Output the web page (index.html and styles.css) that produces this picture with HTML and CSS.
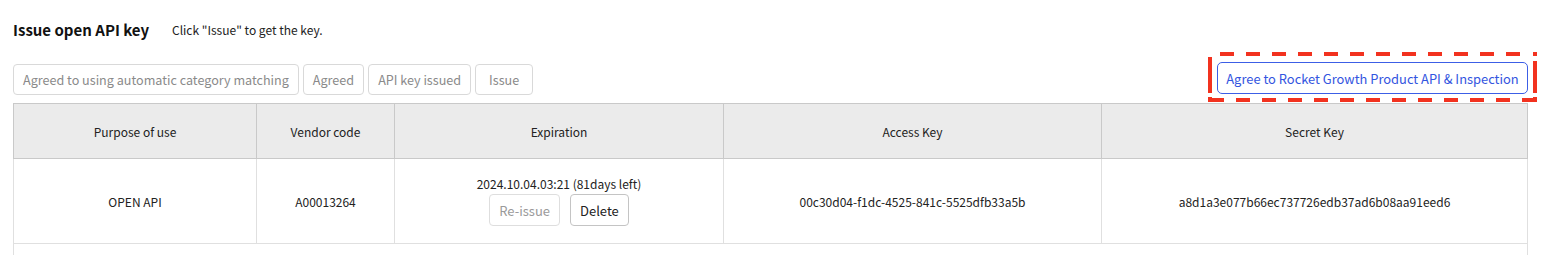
FILE: index.html
```html
<!DOCTYPE html>
<html lang="en">
<head>
<meta charset="utf-8">
<title>Issue open API key</title>
<link rel="stylesheet" href="styles.css">
</head>
<body>
<div class="page">
  <div class="heading">
    <h2 class="title">Issue open API key</h2>
    <span class="subtitle">Click "Issue" to get the key.</span>
  </div>
  <div class="toolbar">
    <div class="left-group">
      <button class="btn btn-muted">Agreed to using automatic category matching</button>
      <button class="btn btn-muted">Agreed</button>
      <button class="btn btn-muted">API key issued</button>
      <button class="btn btn-muted">Issue</button>
    </div>
    <div class="highlight">
      <button class="btn btn-primary">Agree to Rocket Growth Product API &amp; Inspection</button>
    </div>
  </div>
  <table class="keys">
    <colgroup>
      <col class="c1"><col class="c2"><col class="c3"><col class="c4"><col class="c5">
    </colgroup>
    <thead>
      <tr>
        <th>Purpose of use</th>
        <th>Vendor code</th>
        <th>Expiration</th>
        <th>Access Key</th>
        <th>Secret Key</th>
      </tr>
    </thead>
    <tbody>
      <tr class="data">
        <td>OPEN API</td>
        <td>A00013264</td>
        <td>
          <div class="exp-date">2024.10.04.03:21 (81days left)</div>
          <div class="exp-actions">
            <button class="btn btn-small btn-disabled">Re-issue</button>
            <button class="btn btn-small btn-dark">Delete</button>
          </div>
        </td>
        <td>00c30d04-f1dc-4525-841c-5525dfb33a5b</td>
        <td>a8d1a3e077b66ec737726edb37ad6b08aa91eed6</td>
      </tr>
      <tr class="empty">
        <td colspan="5"></td>
      </tr>
    </tbody>
  </table>
</div>
</body>
</html>
```
FILE: styles.css
```css
html, body {
  margin: 0;
  padding: 0;
  background: #fff;
}
body {
  font-family: "Noto Sans CJK KR", "Noto Sans", sans-serif;
  color: #222;
}
.page {
  padding: 19px 22px 0 13px;
}
.heading {
  display: flex;
  align-items: center;
  height: 20px;
}
.title {
  margin: 0;
  font-size: 15px;
  font-weight: 700;
  color: #111;
  width: 159px;
}
.subtitle {
  font-size: 12px;
  color: #222;
}
.toolbar {
  display: flex;
  justify-content: space-between;
  align-items: flex-start;
  margin-top: 13px;
}
.left-group {
  display: flex;
  gap: 4px;
  margin-top: 12px;
}
.btn {
  font-family: inherit;
  background: #fff;
  border: 1px solid #d9d9d9;
  border-radius: 4px;
  height: 31px;
  padding: 0 8px;
  font-size: 13px;
  line-height: 29px;
  cursor: pointer;
}
.btn-muted {
  color: #8a8a8a;
  font-size: 12.6px;
  padding: 0 9px;
}
.left-group .btn:last-child {
  padding: 0 13px;
}
.highlight {
  --red: #f2321f;
  padding: 10px 9px 8px 9px;
  margin-right: -10px;
  width: 311px;
  background:
    repeating-linear-gradient(to right, var(--red) 0 14px, transparent 14px 26px) 12px 0 / calc(100% - 20px) 4px no-repeat,
    repeating-linear-gradient(to right, var(--red) 0 14px, transparent 14px 26px) 2px 100% / calc(100% - 2px) 4px no-repeat,
    linear-gradient(to bottom, transparent 0 5px, var(--red) 5px 41px, transparent 41px 45px, var(--red) 45px 100%) 0 0 / 4px 100% no-repeat,
    linear-gradient(to bottom, var(--red) 0 4px, transparent 4px 9px, var(--red) 9px 41px, transparent 41px 45px, var(--red) 45px 100%) 100% 0 / 4px 100% no-repeat;
}
.btn-primary {
  display: block;
  width: 311px;
  height: 32px;
  color: #3355e0;
  border-color: #3c5ee6;
  border-radius: 5px;
  padding: 0 8px;
  font-size: 12.9px;
}
.keys {
  margin-top: 1px;
  width: 1514px;
  border-collapse: collapse;
  table-layout: fixed;
  font-size: 12px;
}
.c1 { width: 243px; }
.c2 { width: 138px; }
.c3 { width: 329px; }
.c4 { width: 378px; }
.c5 { width: 426px; }
.keys th {
  height: 52px;
  background: #ebebeb;
  border: 1px solid #c9c9c9;
  font-weight: 400;
  color: #222;
  text-align: center;
}
.keys td {
  border: 1px solid #e0e0e0;
  text-align: center;
  color: #222;
}
.keys tr.data td {
  height: 82px;
}
.keys tr.empty td {
  height: 40px;
  border-bottom: none;
}
.exp-date {
  line-height: 16px;
  margin-top: 0;
}
.exp-actions {
  display: flex;
  justify-content: center;
  gap: 10px;
  margin-top: 2px;
}
.btn-small {
  font-size: 13px;
  height: 32px;
  padding: 0 9px;
}
.btn-disabled {
  color: #9a9a9a;
  border-color: #dedede;
}
.btn-dark {
  color: #222;
  border-color: #c4c4c4;
}
```
